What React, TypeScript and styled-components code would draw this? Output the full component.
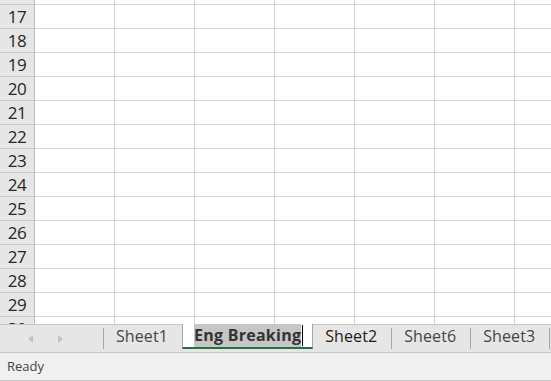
import React from "react";
import styled, { createGlobalStyle } from "styled-components";

const GlobalStyle = createGlobalStyle`
  html, body {
    margin: 0;
    padding: 0;
    background: #ffffff;
  }
  body {
    font-family: "Open Sans", "Noto Sans", sans-serif;
  }
`;

const rows = Array.from({ length: 15 }, (_, i) => 16 + i);
const columns = 7;

interface SheetTab {
  name: string;
  active?: boolean;
  hovered?: boolean;
}

const tabs: SheetTab[] = [
  { name: "Sheet1" },
  { name: "Eng Breaking", active: true },
  { name: "Sheet2", hovered: true },
  { name: "Sheet6" },
  { name: "Sheet3" },
];

// WORKBOOK
function App() {
  return (
    <>
      <GlobalStyle />
      <Workbook>
        {/* Grid */}
        <GridArea>
          <GridBody>
            {rows.map((r) => (
              <Row key={r}>
                <RowHeader>{r}</RowHeader>
                {Array.from({ length: columns }, (_, c) => (
                  <Cell key={c} />
                ))}
              </Row>
            ))}
          </GridBody>
        </GridArea>

        {/* Sheet tabs */}
        <TabBar>
          <NavArrows>
            <Arrow viewBox="0 0 6 8">
              <path d="M5 0 L0 4 L5 8 Z" />
            </Arrow>
            <Arrow viewBox="0 0 6 8">
              <path d="M1 0 L6 4 L1 8 Z" />
            </Arrow>
          </NavArrows>
          <Divider />
          {tabs.map((tab, i) => {
            const next = tabs[i + 1];
            const showDivider = !tab.active && !(next && next.active);
            return (
              <React.Fragment key={tab.name}>
                {tab.active ? (
                  <ActiveTab>
                    <Selected>{tab.name}</Selected>
                    <Caret />
                  </ActiveTab>
                ) : (
                  <Tab $hovered={tab.hovered}>{tab.name}</Tab>
                )}
                {showDivider && <Divider />}
              </React.Fragment>
            );
          })}
        </TabBar>

        {/* Status */}
        <StatusBar>Ready</StatusBar>
      </Workbook>
    </>
  );
}

const Workbook = styled.div`
  width: 551px;
  height: 381px;
  display: flex;
  flex-direction: column;
  overflow: hidden;
  background: #ffffff;
`;

const GridArea = styled.div`
  flex: 1;
  overflow: hidden;
`;

const GridBody = styled.div`
  margin-top: -19px;
  display: flex;
  flex-direction: column;
`;

const Row = styled.div`
  display: flex;
  height: 24px;
  flex-shrink: 0;
`;

const RowHeader = styled.div`
  box-sizing: border-box;
  width: 35px;
  flex-shrink: 0;
  display: flex;
  align-items: center;
  justify-content: center;
  background: #e6e6e6;
  border-right: 1px solid #bdbdbd;
  border-bottom: 1px solid #cbcbcb;
  color: #262626;
  font-size: 17px;
  letter-spacing: -0.5px;
  line-height: 1;
`;

const Cell = styled.div`
  box-sizing: border-box;
  width: 80px;
  flex-shrink: 0;
  border-right: 1px solid #d4d4d4;
  border-bottom: 1px solid #d4d4d4;
`;

const TabBar = styled.div`
  box-sizing: border-box;
  height: 29px;
  flex-shrink: 0;
  display: flex;
  align-items: stretch;
  background: #e6e6e6;
  border-top: 1px solid #c6c6c6;
  border-bottom: 1px solid #c6c6c6;
`;

const NavArrows = styled.div`
  width: 103px;
  flex-shrink: 0;
  display: flex;
  align-items: center;
  gap: 23px;
  padding-left: 28px;
  box-sizing: border-box;
`;

const Arrow = styled.svg`
  width: 6px;
  height: 8px;
  fill: #c2c2c2;
`;

const Divider = styled.div`
  width: 1px;
  flex-shrink: 0;
  margin: 3px 0 3px;
  background: #a6a6a6;
`;

const Tab = styled.div<{ $hovered?: boolean }>`
  display: flex;
  align-items: center;
  padding: 0 14px 6px 12px;
  font-size: 16px;
  letter-spacing: 0.1px;
  color: ${(p) => (p.$hovered ? "#1a1a1a" : "#444444")};
  white-space: nowrap;
`;

const ActiveTab = styled.div`
  box-sizing: border-box;
  display: flex;
  align-items: stretch;
  height: 25px;
  padding: 0 9px 0 11px;
  background: #ffffff;
  border-left: 1px solid #a6a6a6;
  border-right: 1px solid #a6a6a6;
  border-bottom: 2px solid #217346;
  margin-top: -1px;
`;

const Selected = styled.span`
  display: flex;
  align-items: center;
  padding-bottom: 2px;
  background: #c6c6c6;
  color: #333333;
  font-size: 16px;
  font-weight: 700;
  letter-spacing: 0.25px;
  white-space: nowrap;
`;

const Caret = styled.span`
  width: 1px;
  margin: 1px 0 1px 1px;
  background: #000000;
`;

const StatusBar = styled.div`
  box-sizing: border-box;
  height: 28px;
  flex-shrink: 0;
  display: flex;
  align-items: center;
  padding: 0 0 1px 7px;
  background: #f0f0f0;
  border-bottom: 1px solid #c6c6c6;
  color: #444444;
  font-size: 13px;
`;

export default App;
